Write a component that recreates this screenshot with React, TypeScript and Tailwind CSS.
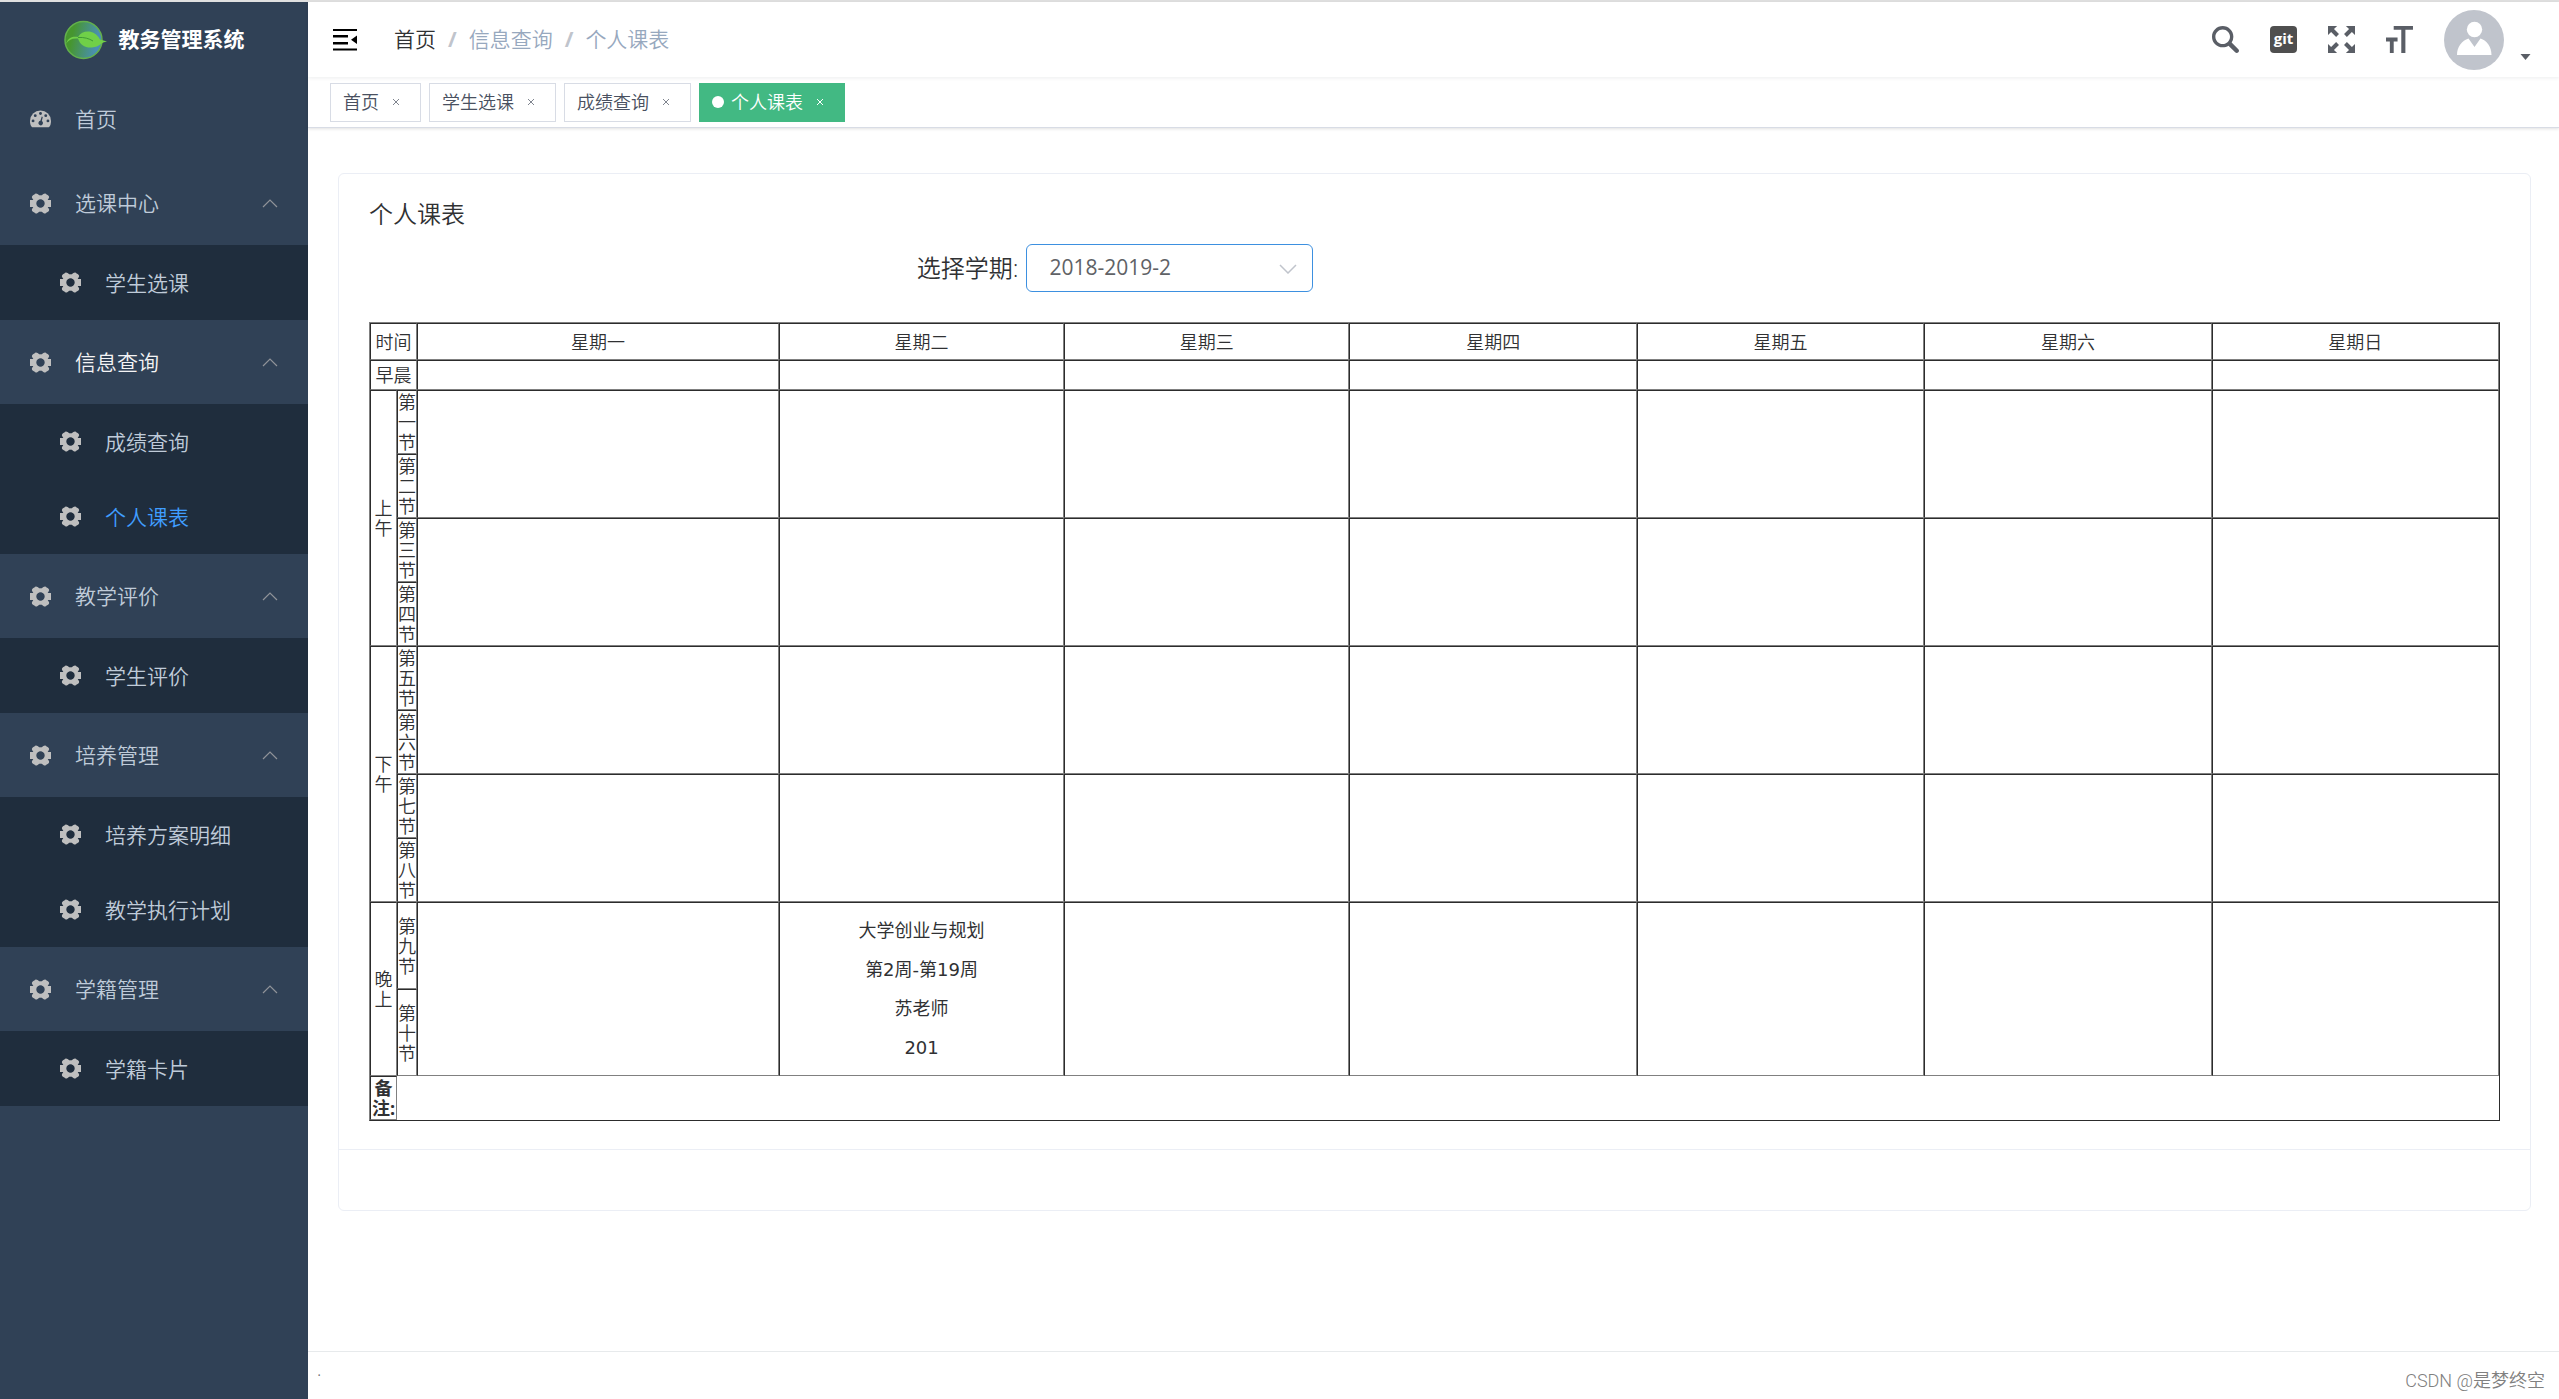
import React, { useState } from 'react';

interface MenuItem {
  title: string;
  children?: string[];
}

const menus: MenuItem[] = [
  { title: '选课中心', children: ['学生选课'] },
  { title: '信息查询', children: ['成绩查询', '个人课表'] },
  { title: '教学评价', children: ['学生评价'] },
  { title: '培养管理', children: ['培养方案明细', '教学执行计划'] },
  { title: '学籍管理', children: ['学籍卡片'] },
];

const tags = ['首页', '学生选课', '成绩查询', '个人课表'];
const weekDays = ['星期一', '星期二', '星期三', '星期四', '星期五', '星期六', '星期日'];

const periods = [
  { name: '上午', sections: ['第一节', '第二节', '第三节', '第四节'] },
  { name: '下午', sections: ['第五节', '第六节', '第七节', '第八节'] },
  { name: '晚上', sections: ['第九节', '第十节'] },
];

// key: first section of the block + day index
const courses: Record<string, string[]> = {
  '第九节-1': ['大学创业与规划', '第2周-第19周', '苏老师', '201'],
};

const current = '个人课表';

const cell = 'border border-t-[#2c2c2c] border-l-[#2c2c2c] border-b-[#808080] border-r-[#808080] p-0';

const GearIcon = () => (
  <svg viewBox="-10.5 -10.5 21 21" className="h-[21px] w-[21px] shrink-0 fill-none stroke-[#bfbfbf]">
    <circle r="6.2" strokeWidth="4" />
    <path
      d="M7 -1H8V1H7M-7 -1H-8V1H-7M3 -6.500L4.300 -7.400M6 -6.300L5 -5M-3 -6.500L-4.300 -7.400M-6 -6.300L-5 -5M3 6.500L4.300 7.400M6 6.300L5 5M-3 6.500L-4.300 7.400M-6 6.300L-5 5"
      strokeWidth="5"
      strokeLinecap="round"
    />
  </svg>
);

const DashboardIcon = () => (
  <svg viewBox="0 0 22 18" className="h-[18px] w-[21px] shrink-0">
    <path d="M11 0A11 11 0 0 0 0 11C0 13.400.6 15.600 1.700 17.200Q2 17.600 2.500 17.600H19.500Q20 17.600 20.300 17.200C21.400 15.600 22 13.400 22 11A11 11 0 0 0 11 0Z" fill="#bfbfbf" />
    <g fill="#304156">
      <circle cx="3.200" cy="11" r="1.500" />
      <circle cx="5.500" cy="5.500" r="1.500" />
      <circle cx="11" cy="3.200" r="1.500" />
      <circle cx="16.500" cy="5.500" r="1.500" />
      <circle cx="18.800" cy="11" r="1.500" />
      <path d="M12.300 6.500L13.400 6.800L12.400 11.200A2.400 2.400 0 1 1 10.900 10.900Z" />
    </g>
  </svg>
);

const Logo = () => (
  <svg viewBox="0 0 43 40" className="h-10 w-[43px] shrink-0">
    <defs>
      <linearGradient id="globe" x1="0" y1="0.3" x2="1" y2="0.5">
        <stop offset="0.2" stopColor="#46962f" />
        <stop offset="0.9" stopColor="#4a8fb5" />
      </linearGradient>
    </defs>
    <circle cx="19.500" cy="20" r="18.500" fill="url(#globe)" stroke="#63b04c" strokeWidth="1.500" />
    <path d="M2 24C4 17 10 16 14 17C19 9 31 10 36 19.500L43 21.500C37 22 36 27 28 27.500C21 28 16 25 14 18.500C8 18 4 20 2 24Z" fill="#70d048" />
    <path d="M14 17.500C20 17 25 18.500 29 21" fill="none" stroke="#3f9a35" strokeWidth="1" />
  </svg>
);

const Sidebar: React.FC = () => {
  const [closed, setClosed] = useState<string[]>([]);

  const toggle = (title: string) =>
    setClosed(prev => (prev.includes(title) ? prev.filter(t => t !== title) : [...prev, title]));

  return (
    <aside className="w-[308px] shrink-0 bg-[#304156] text-[21px] text-[#bfcbd9]">
      <a href="#" className="flex h-[75px] items-center justify-center gap-3 font-bold text-white">
        <Logo />
        教务管理系统
      </a>
      <nav>
        <a href="#" className="flex h-[84px] items-center gap-6 px-[30px]">
          <DashboardIcon />
          <span className="pt-[2px]">首页</span>
        </a>
        {menus.map(menu => (
          <div key={menu.title}>
            <button
              onClick={() => toggle(menu.title)}
              className={`flex h-[84px] w-full items-center gap-6 px-[30px] ${menu.children?.includes(current) ? 'text-[#f4f4f5]' : ''}`}
            >
              <GearIcon />
              <span className="pt-[2px]">{menu.title}</span>
              <svg viewBox="0 0 16 9" className="ml-auto h-[9px] w-4 fill-none stroke-[#909399]">
                <path d="M1 8L8 1L15 8" strokeWidth="1.200" />
              </svg>
            </button>
            {!closed.includes(menu.title) && (
              <div className="bg-[#1f2d3d]">
                {menu.children?.map(child => (
                  <a
                    key={child}
                    href="#"
                    className={`flex h-[75px] items-center gap-6 pl-[60px] ${child === current ? 'text-[#409eff]' : ''}`}
                  >
                    <GearIcon />
                    <span className="pt-[2px]">{child}</span>
                  </a>
                ))}
              </div>
            )}
          </div>
        ))}
      </nav>
    </aside>
  );
};

const Navbar: React.FC = () => (
  <header className="relative z-10 flex h-[75px] items-center bg-white pr-7 pl-6 text-[21px] shadow-[0_1px_4px_rgba(0,21,41,0.08)]">
    <button aria-label="折叠菜单">
      <svg viewBox="0 0 26 22" className="h-[22px] w-[26px]">
        <path d="M1 0H25V2H1ZM1 6H16V8.500H1ZM1 13H16V15.500H1ZM1 19.500H25V21.500H1ZM25 6.500V15L19 10.800Z" />
      </svg>
    </button>
    <nav className="ml-9 flex items-center gap-3 text-[#97a8be]">
      <a href="#" className="text-[#303133]">首页</a>
      <span className="font-bold text-[#c0c4cc]">/</span>
      <span>信息查询</span>
      <span className="font-bold text-[#c0c4cc]">/</span>
      <span>个人课表</span>
    </nav>
    <div className="ml-auto flex items-center gap-[31px]">
      <button aria-label="搜索">
        <svg viewBox="0 0 128 128" className="h-[27px] w-[27px] fill-[#5a5e66]">
          <path d="M124.884 109.812L94.256 79.166c-.357-.357-.757-.629-1.129-.914a50.366 50.366 0 0 0 8.186-27.590C101.327 22.689 78.656 0 50.670 0 22.685 0 0 22.688 0 50.663c0 27.989 22.685 50.663 50.656 50.663 10.186 0 19.643-3.030 27.600-8.201.286.385.557.771.9 1.114l30.628 30.632a10.633 10.633 0 0 0 7.543 3.129c2.728 0 5.457-1.043 7.543-3.115 4.171-4.157 4.171-10.915.014-15.073M50.671 85.338C31.557 85.338 16 69.780 16 50.663c0-19.102 15.557-34.661 34.670-34.661 19.115 0 34.657 15.559 34.657 34.675 0 19.102-15.557 34.661-34.656 34.661" />
        </svg>
      </button>
      <a href="#" className="flex h-[27px] w-[27px] justify-center rounded bg-[#4f4f4f] text-[15px] leading-6 font-bold text-white">
        git
      </a>
      <button aria-label="全屏">
        <svg viewBox="0 0 128 128" className="h-[27px] w-[27px] fill-[#5a5e66]">
          <path d="M38.470 52L52 38.462l-23.648-23.670L43.209 0H0v43.137l14.757-14.865L38.470 52zm74.773 47.726L89.526 76 76 89.536l23.648 23.672L84.795 128H128V84.863l-14.757 14.863zM89.538 52l23.668-23.648L128 43.207V0H84.866l14.853 14.756L76 38.470 89.538 52zM38.460 76L14.792 99.651 0 84.794V128h43.137l-14.865-14.757L52 89.530 38.460 76z" />
        </svg>
      </button>
      <button aria-label="布局大小">
        <svg viewBox="0 0 128 128" className="h-[27px] w-[27px] fill-[#5a5e66]">
          <path d="M0 54.857h54.796v18.286H36.531V128H18.265V73.143H0V54.857zm127.857-36.571H91.935V128H72.456V18.286H36.534V0h91.326l-.003 18.286z" />
        </svg>
      </button>
      <button aria-label="用户菜单" className="flex items-end gap-4">
        <svg viewBox="0 0 60 60" className="h-[60px] w-[60px]">
          <circle cx="30" cy="30" r="30" fill="#c0c4cc" />
          <circle cx="30.500" cy="19.500" r="7.700" fill="#fff" />
          <path d="M13 45C13 37 18 30.500 24.500 28.500L30.500 37L36.500 28.500C43 30.500 47.500 37 47.500 45Z" fill="#fff" />
        </svg>
        <svg viewBox="0 0 10 6" className="mb-[10px] h-[6px] w-[11px] fill-[#5a5e66]">
          <path d="M0 0H10L5 6Z" />
        </svg>
      </button>
    </div>
  </header>
);

const TagsView: React.FC = () => (
  <div className="flex h-[51px] items-center gap-2 border-b border-[#d8dce5] bg-white pl-[22px] text-[18px] shadow-[0_1px_3px_rgba(0,0,0,0.12)]">
    {tags.map(tag => {
      const active = tag === current;
      return (
        <span
          key={tag}
          className={`flex h-[39px] items-center border px-3 ${active ? 'border-[#42b983] bg-[#42b983] text-white' : 'border-[#d8dce5] bg-white text-[#495060]'}`}
        >
          {active && <span className="mr-[7px] h-3 w-3 rounded-full bg-white" />}
          <a href="#">{tag}</a>
          <button aria-label={`关闭${tag}`} className="ml-[5px] flex h-6 w-6 items-center justify-center">
            <svg viewBox="0 0 8 8" className={`h-2 w-2 ${active ? 'stroke-white' : 'stroke-[#80858f]'}`}>
              <path d="M1 1L7 7M7 1L1 7" />
            </svg>
          </button>
        </span>
      );
    })}
  </div>
);

const Timetable: React.FC = () => (
  <table className="w-full table-fixed border-separate border-spacing-0 border border-t-[#808080] border-l-[#808080] border-b-[#2c2c2c] border-r-[#2c2c2c] text-center text-[18px] leading-5 text-[#303133]">
    <colgroup>
      <col className="w-[27px]" />
      <col className="w-5" />
      <col className="w-[17%]" />
      <col className="w-[13.4%]" />
      <col className="w-[13.4%]" />
      <col />
      <col />
      <col />
      <col />
    </colgroup>
    <tbody>
      <tr className="h-[37px]">
        <td colSpan={2} className={cell}>时间</td>
        {weekDays.map(day => <td key={day} className={cell}>{day}</td>)}
      </tr>
      <tr className="h-[30px]">
        <td colSpan={2} className={cell}>早晨</td>
        {weekDays.map(day => <td key={day} className={cell} />)}
      </tr>
      {periods.map(period =>
        period.sections.map((section, i) => (
          <tr key={section} className={period.name === '晚上' ? 'h-[87px]' : 'h-16'}>
            {i === 0 && <td rowSpan={period.sections.length} className={cell}>{period.name}</td>}
            <td className={cell}>{section}</td>
            {i % 2 === 0 && weekDays.map((day, d) => (
              <td key={day} rowSpan={2} className={cell}>
                {courses[`${section}-${d}`]?.map(line => (
                  <p key={line} className="font-['DejaVu_Sans','Noto_Sans_CJK_SC',sans-serif] leading-[39px] font-normal">{line}</p>
                ))}
              </td>
            ))}
          </tr>
        ))
      )}
      <tr className="h-11">
        <th className={`${cell} font-bold`}>备注:</th>
        <td colSpan={8} />
      </tr>
    </tbody>
  </table>
);

export default function App() {
  const [term, setTerm] = useState('2018-2019-2');

  return (
    <div className="flex min-h-screen border-t-2 border-[#e0e0e0] bg-white font-['Open_Sans','Noto_Sans_CJK_SC',sans-serif] font-[350] text-[#303133]">
      <Sidebar />
      <div className="flex min-w-0 flex-1 flex-col">
        <Navbar />
        <TagsView />
        <main className="mt-[45px] mr-7 ml-[30px] rounded-md border border-[#ebeef5]">
          <section className="px-[30px] pt-6 pb-7">
            <h1 className="text-2xl font-[350]">个人课表</h1>
            <div className="mt-[14px] mb-[30px] ml-[25%] flex h-12 items-center gap-2 pl-[15px]">
              <label htmlFor="term" className="text-2xl">选择学期:</label>
              <div className="relative">
                <select
                  id="term"
                  value={term}
                  onChange={e => setTerm(e.target.value)}
                  className="h-12 w-[287px] appearance-none rounded-md border border-[#3d90e0] bg-white pl-[22px] text-[21px] font-normal text-[#606266] outline-none"
                >
                  <option>2018-2019-2</option>
                  <option>2018-2019-1</option>
                </select>
                <svg viewBox="0 0 18 10" className="pointer-events-none absolute top-5 right-4 h-[10px] w-[18px] fill-none stroke-[#c0c4cc]">
                  <path d="M1 1L9 9L17 1" strokeWidth="1.500" />
                </svg>
              </div>
            </div>
            <Timetable />
          </section>
          <div className="h-[61px] border-t border-[#ebeef5]" />
        </main>
        <footer className="mt-auto flex h-12 justify-between border-t border-[#e7eaec] pr-[14px] pl-[9px] text-[18px]">
          <span className="mt-1 self-start text-[#676a6c]">.</span>
          <span className="mb-[5px] self-end font-['Roboto','Noto_Sans_CJK_SC',sans-serif] text-[#808080]">CSDN @是梦终空</span>
        </footer>
      </div>
    </div>
  );
}
